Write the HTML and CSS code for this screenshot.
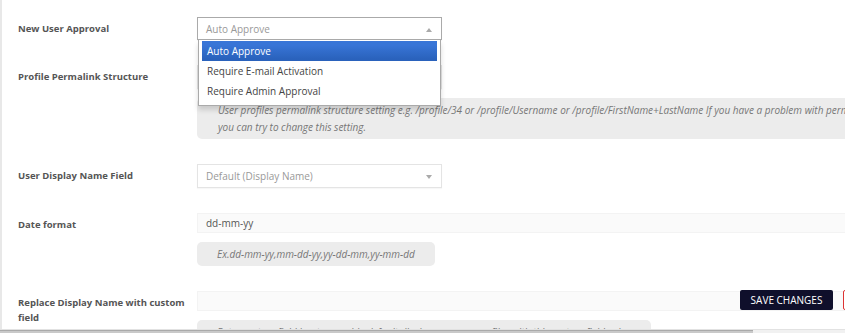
FILE: index.html
```html
<!DOCTYPE html>
<html lang="en">
<head>
    <meta charset="UTF-8">
    <meta name="viewport" content="width=device-width, initial-scale=1.0">
    <title>General Settings</title>
    <link rel="stylesheet" href="styles.css">
</head>
<body>
    <div class="settings">
        <div class="row">
            <div class="label">New User Approval</div>
            <div class="field">
                <div class="select active">Auto Approve <span class="arrow up"></span></div>
                <ul class="dropdown">
                    <li class="highlighted">Auto Approve</li>
                    <li>Require E-mail Activation</li>
                    <li>Require Admin Approval</li>
                </ul>
            </div>
        </div>

        <div class="row">
            <div class="label">Profile Permalink Structure</div>
            <div class="field">
                <div class="select"><span class="arrow"></span></div>
                <div class="hint wide">User profiles permalink structure setting e.g. /profile/34 or /profile/Username or /profile/FirstName+LastName If you have a problem with permalink structure,<br>you can try to change this setting.</div>
            </div>
        </div>

        <div class="row">
            <div class="label">User Display Name Field</div>
            <div class="field">
                <div class="select">Default (Display Name) <span class="arrow"></span></div>
            </div>
        </div>

        <div class="row">
            <div class="label">Date format</div>
            <div class="field">
                <input class="text-input" type="text" value="dd-mm-yy">
                <div class="hint">Ex.dd-mm-yy,mm-dd-yy,yy-dd-mm,yy-mm-dd</div>
            </div>
        </div>

        <div class="row">
            <div class="label">Replace Display Name with custom field</div>
            <div class="field">
                <input class="text-input" type="text" value="">
                <div class="hint">Enter custom field key to override default display name on profiles with this custom field value</div>
            </div>
        </div>
    </div>

    <div class="save-bar">
        <button class="btn-save">Save Changes</button>
        <button class="btn-reset">Reset</button>
    </div>

    <div class="scrollbar"><div class="thumb"></div></div>
</body>
</html>
```

FILE: styles.css
```css
* {
    margin: 0;
    padding: 0;
    box-sizing: border-box;
}
html, body {
    overflow: hidden;
    height: 100%;
}
body {
    font-family: "Open Sans", "Noto Sans", sans-serif;
    font-size: 10px;
    color: #555;
    background: #fff;
    border-left: 2px solid #e8e8e8;
}
.settings {
    width: 1200px;
    padding-top: 17px;
}
.row {
    display: flex;
    margin-bottom: 25px;
}
.label {
    width: 195px;
    padding-left: 16px;
    padding-top: 4px;
    padding-right: 4px;
    font-size: 9.5px;
    font-weight: 700;
    line-height: 15px;
    color: #555;
}
.field {
    position: relative;
    flex: 1;
}
.select {
    position: relative;
    width: 245px;
    height: 24px;
    line-height: 22px;
    padding-left: 8px;
    border: 1px solid #e4e4e4;
    color: #999;
    background: #fff;
    box-shadow: 0 1px 1px rgba(0,0,0,0.03);
}
.select.active {
    height: 23px;
    border-color: #aaa;
}
.arrow {
    position: absolute;
    right: 9px;
    top: 10px;
    border-left: 3px solid transparent;
    border-right: 3px solid transparent;
    border-top: 4px solid #aaa;
}
.arrow.up {
    border-top: none;
    border-bottom: 4px solid #aaa;
}
.dropdown {
    position: absolute;
    left: 1px;
    top: 23px;
    width: 243px;
    list-style: none;
    background: #fff;
    border: 1px solid #aaa;
    border-top: none;
    padding: 1px 3px 4px;
    box-shadow: 0 4px 5px rgba(0,0,0,0.15);
    z-index: 5;
}
.dropdown li {
    height: 20px;
    line-height: 20px;
    padding-left: 5px;
    color: #444;
}
.dropdown li.highlighted {
    color: #fff;
    background: linear-gradient(#3875d7 20%, #2a62bc 90%);
}
.hint {
    display: inline-block;
    margin-top: 9px;
    padding: 4px 20px;
    line-height: 16px;
    font-style: italic;
    color: #777;
    background: #ececec;
    border-radius: 5px;
    white-space: nowrap;
}
.hint.wide {
    padding: 4px 21px;
    line-height: 16.5px;
}
.text-input {
    display: block;
    width: 900px;
    height: 20px;
    padding-left: 8px;
    font-family: inherit;
    font-size: 10px;
    color: #555;
    background: #fafafa;
    border: 1px solid #f3f3f3;
    outline: none;
}
.save-bar {
    position: absolute;
    left: 740px;
    top: 290px;
    display: flex;
    gap: 10px;
}
.btn-save {
    width: 93px;
    height: 20px;
    font-family: inherit;
    font-size: 10px;
    text-transform: uppercase;
    color: #fff;
    background: #0f0f2b;
    border: none;
    border-radius: 2px;
}
.btn-reset {
    width: 80px;
    height: 20px;
    font-family: inherit;
    font-size: 10px;
    text-transform: uppercase;
    color: #d33;
    background: #fff;
    border: 1px solid #d33;
    border-radius: 2px;
}
.scrollbar {
    position: fixed;
    left: 0;
    right: 0;
    bottom: 0;
    height: 4px;
    background: #f1f1f1;
    border-top: 1px solid #e2e2e2;
}
.thumb {
    width: 753px;
    height: 3px;
    background: #c9c9c9;
    border-top: 1px solid #aaa;
}
```
